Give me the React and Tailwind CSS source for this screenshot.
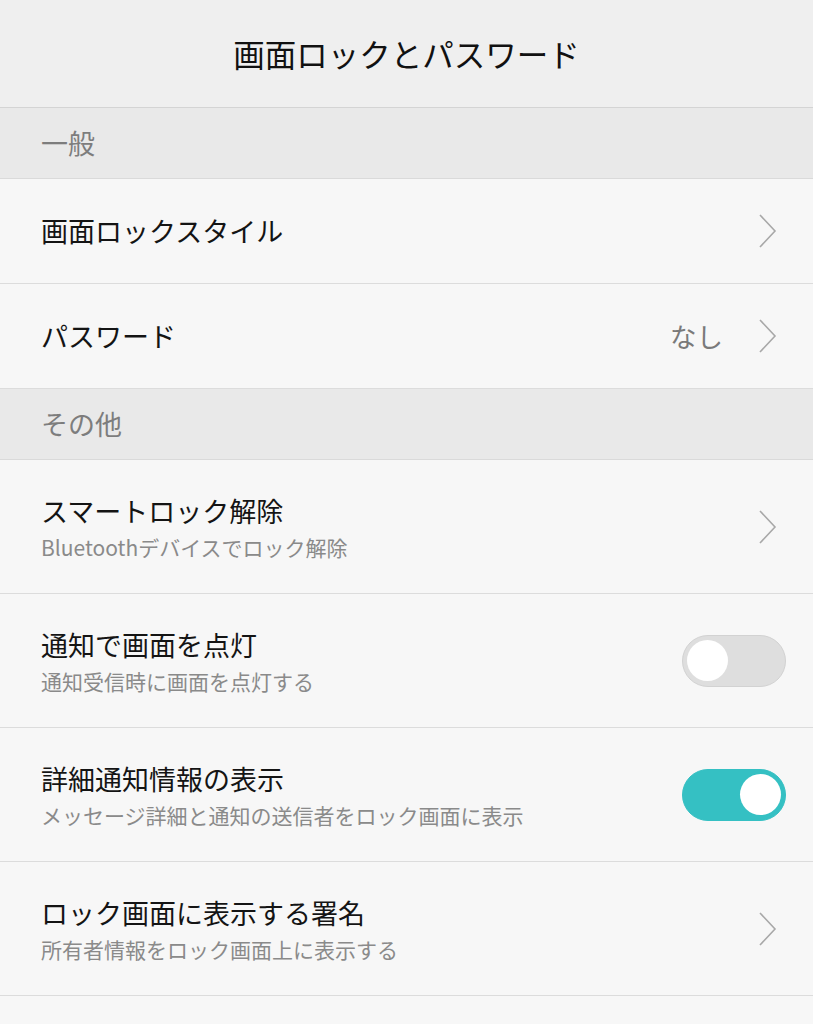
const font = { fontFamily: '"Noto Sans CJK JP", "Noto Sans", sans-serif' };

function Chevron() {
  return (
    <svg width="20" height="36" viewBox="0 0 20 36" className="shrink-0">
      <path d="M3 2 L18 18 L3 34" fill="none" stroke="#a8a8a8" strokeWidth="1.6" />
    </svg>
  );
}

function Toggle({ on }) {
  return (
    <div
      className={`flex h-[52px] w-[104px] shrink-0 items-center rounded-full border-[1.5px] px-[4px] ${
        on ? 'justify-end border-[#35c0c3] bg-[#35c0c3]' : 'justify-start border-[#d2d2d2] bg-[#dedede]'
      }`}
    >
      <div className="h-[41px] w-[41px] rounded-full bg-white" />
    </div>
  );
}

function Section({ label }) {
  return (
    <div className="flex h-[71px] items-center border-b border-[#dadada] bg-[#e9e9e9] px-[41px]">
      <span className="text-[27px] text-[#7d7d7d]">{label}</span>
    </div>
  );
}

function Row({ title, sub, value, toggle }) {
  return (
    <div
      className={`flex items-center border-b border-[#dcdcdc] bg-[#f7f7f7] pl-[41px] ${
        sub ? 'h-[134px]' : 'h-[105px]'
      } ${toggle === undefined ? 'pr-[36px]' : 'pr-[27px]'}`}
    >
      <div className="flex min-w-0 flex-1 flex-col">
        <span className="text-[27px] leading-[36px] text-[#141414]">{title}</span>
        {sub && <span className="mt-[4px] text-[21px] leading-[28px] text-[#8a8a8a]">{sub}</span>}
      </div>
      {value && <span className="mr-[34px] text-[26.5px] text-[#7a7a7a]">{value}</span>}
      {toggle === undefined ? <Chevron /> : <Toggle on={toggle} />}
    </div>
  );
}

export default function App() {
  return (
    <div className="min-h-[1024px] w-[813px] bg-[#f7f7f7]" style={font}>
      <div className="flex h-[108px] items-center justify-center border-b border-[#d4d4d4] bg-[#efefef]">
        <h1 className="text-[31.5px] text-[#111]">画面ロックとパスワード</h1>
      </div>
      <Section label="一般" />
      <Row title="画面ロックスタイル" />
      <Row title="パスワード" value="なし" />
      <Section label="その他" />
      <Row title="スマートロック解除" sub="Bluetoothデバイスでロック解除" />
      <Row title="通知で画面を点灯" sub="通知受信時に画面を点灯する" toggle={false} />
      <Row title="詳細通知情報の表示" sub="メッセージ詳細と通知の送信者をロック画面に表示" toggle={true} />
      <Row title="ロック画面に表示する署名" sub="所有者情報をロック画面上に表示する" />
    </div>
  );
}
